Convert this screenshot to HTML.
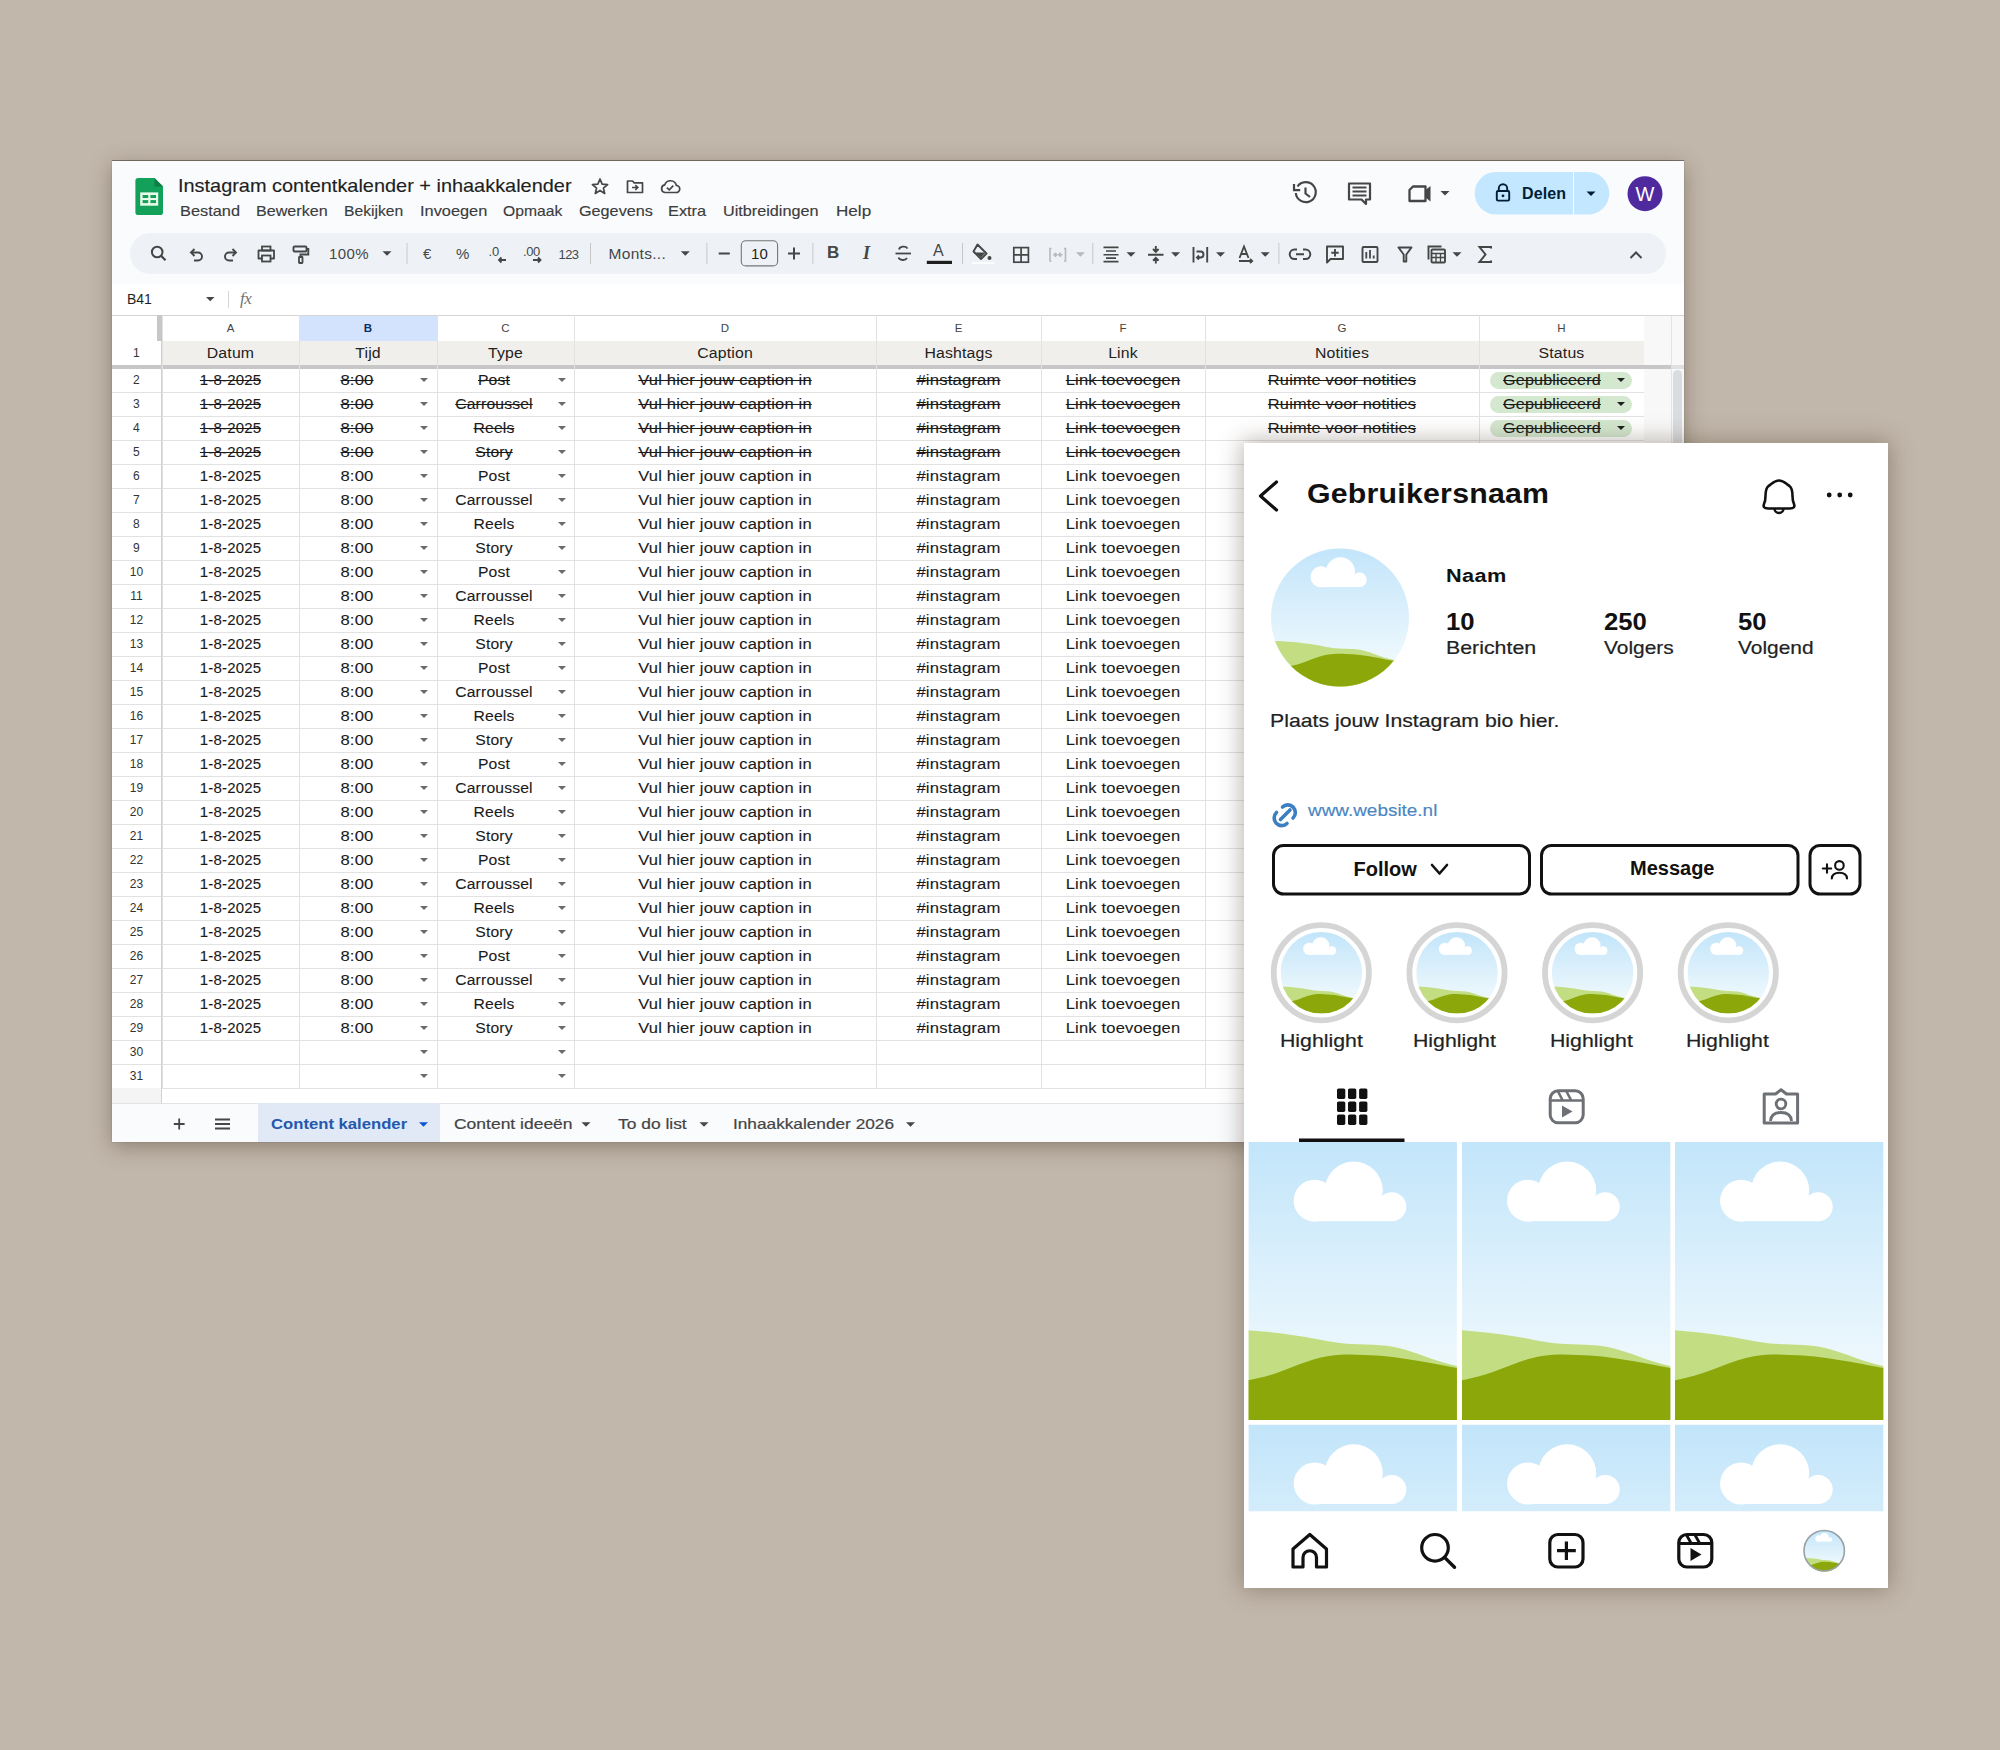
<!DOCTYPE html><html><head><meta charset='utf-8'><style>
*{margin:0;padding:0;box-sizing:border-box}
html,body{width:2000px;height:1750px;overflow:hidden;background:#c2b7ab;font-family:"Liberation Sans",sans-serif}
.a{position:absolute}
.t{position:absolute;white-space:nowrap}
.win{position:absolute;left:112px;top:161px;width:1572px;height:981px;background:#f9fbfd;overflow:hidden;box-shadow:0 5px 20px rgba(70,55,40,.42),0 -1px 0 rgba(70,60,50,.55),0 0 1px rgba(0,0,0,.35)}
.cell{position:absolute;white-space:nowrap;font-size:14px;line-height:24px;height:24px;color:#1a1a1a;text-align:center;letter-spacing:.15px;-webkit-text-stroke:.1px #1a1a1a}
.st{text-decoration:line-through;text-decoration-thickness:1px}
.rn{position:absolute;left:0;width:49px;text-align:center;font-size:12px;line-height:24px;color:#333;letter-spacing:.1px}
.dd{position:absolute;width:0;height:0;border-left:4.5px solid transparent;border-right:4.5px solid transparent;border-top:4.5px solid #6b6b6b}
.hl{position:absolute;height:1px;background:#e2e2e2}
.vl{position:absolute;width:1px;background:#e2e2e2}
.ig{position:absolute;left:1244px;top:443px;width:644px;height:1145px;background:#fff;overflow:hidden;box-shadow:0 0 22px 2px rgba(70,55,40,.38)}
</style></head><body>
<div class='win'>
<div class='t' style='left:66px;top:14px;font-size:19px;color:#1f1f1f;line-height:22px;transform-origin:0 50%;transform:scaleX(1.048);-webkit-text-stroke:.15px #1f1f1f'>Instagram contentkalender + inhaakkalender</div>
<div class='t' style='left:67.5px;top:41px;font-size:15px;color:#3c3c3c;line-height:18px;transform-origin:0 50%;transform:scaleX(1.090);-webkit-text-stroke:.15px #3c3c3c'>Bestand</div>
<div class='t' style='left:144.0px;top:41px;font-size:15px;color:#3c3c3c;line-height:18px;transform-origin:0 50%;transform:scaleX(1.075);-webkit-text-stroke:.15px #3c3c3c'>Bewerken</div>
<div class='t' style='left:231.8px;top:41px;font-size:15px;color:#3c3c3c;line-height:18px;transform-origin:0 50%;transform:scaleX(1.045);-webkit-text-stroke:.15px #3c3c3c'>Bekijken</div>
<div class='t' style='left:308.0px;top:41px;font-size:15px;color:#3c3c3c;line-height:18px;transform-origin:0 50%;transform:scaleX(1.090);-webkit-text-stroke:.15px #3c3c3c'>Invoegen</div>
<div class='t' style='left:391.0px;top:41px;font-size:15px;color:#3c3c3c;line-height:18px;transform-origin:0 50%;transform:scaleX(1.045);-webkit-text-stroke:.15px #3c3c3c'>Opmaak</div>
<div class='t' style='left:467.3px;top:41px;font-size:15px;color:#3c3c3c;line-height:18px;transform-origin:0 50%;transform:scaleX(1.080);-webkit-text-stroke:.15px #3c3c3c'>Gegevens</div>
<div class='t' style='left:555.8px;top:41px;font-size:15px;color:#3c3c3c;line-height:18px;transform-origin:0 50%;transform:scaleX(1.090);-webkit-text-stroke:.15px #3c3c3c'>Extra</div>
<div class='t' style='left:611.0px;top:41px;font-size:15px;color:#3c3c3c;line-height:18px;transform-origin:0 50%;transform:scaleX(1.080);-webkit-text-stroke:.15px #3c3c3c'>Uitbreidingen</div>
<div class='t' style='left:724.0px;top:41px;font-size:15px;color:#3c3c3c;line-height:18px;transform-origin:0 50%;transform:scaleX(1.140);-webkit-text-stroke:.15px #3c3c3c'>Help</div>
<div class='a' style='left:18px;top:72px;width:1536px;height:41px;border-radius:21px;background:#eef2f7'></div>
<div class='a' style='left:0;top:123px;width:1572px;height:819px;background:#fff'></div>
<div class='t' style='left:15px;top:130px;font-size:14px;color:#1f1f1f;line-height:16px'>B41</div>
<div class='hl' style='left:0;top:154px;width:1572px;background:#d4d4d4'></div>
<div class='a' style='left:187px;top:155px;width:138px;height:25px;background:#d3e3fd'></div>
<div class='t' style='left:50px;top:155px;width:137px;text-align:center;font-size:11.5px;line-height:25px;color:#444'>A</div>
<div class='t' style='left:187px;top:155px;width:138px;text-align:center;font-size:11.5px;line-height:25px;font-weight:bold;color:#0b2f66'>B</div>
<div class='t' style='left:325px;top:155px;width:137px;text-align:center;font-size:11.5px;line-height:25px;color:#444'>C</div>
<div class='t' style='left:462px;top:155px;width:302px;text-align:center;font-size:11.5px;line-height:25px;color:#444'>D</div>
<div class='t' style='left:764px;top:155px;width:165px;text-align:center;font-size:11.5px;line-height:25px;color:#444'>E</div>
<div class='t' style='left:929px;top:155px;width:164px;text-align:center;font-size:11.5px;line-height:25px;color:#444'>F</div>
<div class='t' style='left:1093px;top:155px;width:274px;text-align:center;font-size:11.5px;line-height:25px;color:#444'>G</div>
<div class='t' style='left:1367px;top:155px;width:165px;text-align:center;font-size:11.5px;line-height:25px;color:#444'>H</div>
<div class='a' style='left:50px;top:180px;width:1482px;height:24px;background:#f1efeb'></div>
<div class='cell' style='left:50px;top:180px;width:137px;transform:scaleX(1.13);-webkit-text-stroke:0;color:#222'>Datum</div>
<div class='cell' style='left:187px;top:180px;width:138px;transform:scaleX(1.13);-webkit-text-stroke:0;color:#222'>Tijd</div>
<div class='cell' style='left:325px;top:180px;width:137px;transform:scaleX(1.13);-webkit-text-stroke:0;color:#222'>Type</div>
<div class='cell' style='left:462px;top:180px;width:302px;transform:scaleX(1.13);-webkit-text-stroke:0;color:#222'>Caption</div>
<div class='cell' style='left:764px;top:180px;width:165px;transform:scaleX(1.13);-webkit-text-stroke:0;color:#222'>Hashtags</div>
<div class='cell' style='left:929px;top:180px;width:164px;transform:scaleX(1.13);-webkit-text-stroke:0;color:#222'>Link</div>
<div class='cell' style='left:1093px;top:180px;width:274px;transform:scaleX(1.13);-webkit-text-stroke:0;color:#222'>Notities</div>
<div class='cell' style='left:1367px;top:180px;width:165px;transform:scaleX(1.13);-webkit-text-stroke:0;color:#222'>Status</div>
<div class='rn' style='top:180px'>1</div>
<div class='a' style='left:0;top:204px;width:1532px;height:4px;background:#c7c7c7'></div>
<div class='a' style='left:45px;top:154px;width:5px;height:26px;background:#c7c7c7'></div>
<div class='rn' style='top:207px'>2</div>
<div class='cell st' style='left:50px;top:207px;width:137px;transform:scaleX(1.07)'>1-8-2025</div>
<div class='cell st' style='left:188px;top:207px;width:114px;transform:scaleX(1.19)'>8:00</div>
<div class='cell st' style='left:325px;top:207px;width:114px;transform:scaleX(1.12)'>Post</div>
<div class='cell st' style='left:462px;top:207px;width:302px;transform:scaleX(1.18)'>Vul hier jouw caption in</div>
<div class='cell st' style='left:764px;top:207px;width:165px;transform:scaleX(1.19)'>#instagram</div>
<div class='cell st' style='left:929px;top:207px;width:164px;transform:scaleX(1.18)'>Link toevoegen</div>
<div class='cell st' style='left:1093px;top:207px;width:274px;transform:scaleX(1.17)'>Ruimte voor notities</div>
<div class='a' style='left:1378px;top:211px;width:142px;height:17px;border-radius:9px;background:#d4e7cf'></div>
<div class='cell st' style='left:1391px;top:207px;width:98px;transform:scaleX(1.15)'>Gepubliceerd</div>
<div class='dd' style='left:1505px;top:217px;border-top-color:#1f1f1f'></div>
<div class='dd' style='left:308px;top:217px'></div>
<div class='dd' style='left:446px;top:217px'></div>
<div class='hl' style='left:0;top:231px;width:1532px'></div>
<div class='rn' style='top:231px'>3</div>
<div class='cell st' style='left:50px;top:231px;width:137px;transform:scaleX(1.07)'>1-8-2025</div>
<div class='cell st' style='left:188px;top:231px;width:114px;transform:scaleX(1.19)'>8:00</div>
<div class='cell st' style='left:325px;top:231px;width:114px;transform:scaleX(1.12)'>Carroussel</div>
<div class='cell st' style='left:462px;top:231px;width:302px;transform:scaleX(1.18)'>Vul hier jouw caption in</div>
<div class='cell st' style='left:764px;top:231px;width:165px;transform:scaleX(1.19)'>#instagram</div>
<div class='cell st' style='left:929px;top:231px;width:164px;transform:scaleX(1.18)'>Link toevoegen</div>
<div class='cell st' style='left:1093px;top:231px;width:274px;transform:scaleX(1.17)'>Ruimte voor notities</div>
<div class='a' style='left:1378px;top:235px;width:142px;height:17px;border-radius:9px;background:#d4e7cf'></div>
<div class='cell st' style='left:1391px;top:231px;width:98px;transform:scaleX(1.15)'>Gepubliceerd</div>
<div class='dd' style='left:1505px;top:241px;border-top-color:#1f1f1f'></div>
<div class='dd' style='left:308px;top:241px'></div>
<div class='dd' style='left:446px;top:241px'></div>
<div class='hl' style='left:0;top:255px;width:1532px'></div>
<div class='rn' style='top:255px'>4</div>
<div class='cell st' style='left:50px;top:255px;width:137px;transform:scaleX(1.07)'>1-8-2025</div>
<div class='cell st' style='left:188px;top:255px;width:114px;transform:scaleX(1.19)'>8:00</div>
<div class='cell st' style='left:325px;top:255px;width:114px;transform:scaleX(1.12)'>Reels</div>
<div class='cell st' style='left:462px;top:255px;width:302px;transform:scaleX(1.18)'>Vul hier jouw caption in</div>
<div class='cell st' style='left:764px;top:255px;width:165px;transform:scaleX(1.19)'>#instagram</div>
<div class='cell st' style='left:929px;top:255px;width:164px;transform:scaleX(1.18)'>Link toevoegen</div>
<div class='cell st' style='left:1093px;top:255px;width:274px;transform:scaleX(1.17)'>Ruimte voor notities</div>
<div class='a' style='left:1378px;top:259px;width:142px;height:17px;border-radius:9px;background:#d4e7cf'></div>
<div class='cell st' style='left:1391px;top:255px;width:98px;transform:scaleX(1.15)'>Gepubliceerd</div>
<div class='dd' style='left:1505px;top:265px;border-top-color:#1f1f1f'></div>
<div class='dd' style='left:308px;top:265px'></div>
<div class='dd' style='left:446px;top:265px'></div>
<div class='hl' style='left:0;top:279px;width:1532px'></div>
<div class='rn' style='top:279px'>5</div>
<div class='cell st' style='left:50px;top:279px;width:137px;transform:scaleX(1.07)'>1-8-2025</div>
<div class='cell st' style='left:188px;top:279px;width:114px;transform:scaleX(1.19)'>8:00</div>
<div class='cell st' style='left:325px;top:279px;width:114px;transform:scaleX(1.12)'>Story</div>
<div class='cell st' style='left:462px;top:279px;width:302px;transform:scaleX(1.18)'>Vul hier jouw caption in</div>
<div class='cell st' style='left:764px;top:279px;width:165px;transform:scaleX(1.19)'>#instagram</div>
<div class='cell st' style='left:929px;top:279px;width:164px;transform:scaleX(1.18)'>Link toevoegen</div>
<div class='dd' style='left:308px;top:289px'></div>
<div class='dd' style='left:446px;top:289px'></div>
<div class='hl' style='left:0;top:303px;width:1532px'></div>
<div class='rn' style='top:303px'>6</div>
<div class='cell' style='left:50px;top:303px;width:137px;transform:scaleX(1.07)'>1-8-2025</div>
<div class='cell' style='left:188px;top:303px;width:114px;transform:scaleX(1.19)'>8:00</div>
<div class='cell' style='left:325px;top:303px;width:114px;transform:scaleX(1.12)'>Post</div>
<div class='cell' style='left:462px;top:303px;width:302px;transform:scaleX(1.18)'>Vul hier jouw caption in</div>
<div class='cell' style='left:764px;top:303px;width:165px;transform:scaleX(1.19)'>#instagram</div>
<div class='cell' style='left:929px;top:303px;width:164px;transform:scaleX(1.18)'>Link toevoegen</div>
<div class='dd' style='left:308px;top:313px'></div>
<div class='dd' style='left:446px;top:313px'></div>
<div class='hl' style='left:0;top:327px;width:1532px'></div>
<div class='rn' style='top:327px'>7</div>
<div class='cell' style='left:50px;top:327px;width:137px;transform:scaleX(1.07)'>1-8-2025</div>
<div class='cell' style='left:188px;top:327px;width:114px;transform:scaleX(1.19)'>8:00</div>
<div class='cell' style='left:325px;top:327px;width:114px;transform:scaleX(1.12)'>Carroussel</div>
<div class='cell' style='left:462px;top:327px;width:302px;transform:scaleX(1.18)'>Vul hier jouw caption in</div>
<div class='cell' style='left:764px;top:327px;width:165px;transform:scaleX(1.19)'>#instagram</div>
<div class='cell' style='left:929px;top:327px;width:164px;transform:scaleX(1.18)'>Link toevoegen</div>
<div class='dd' style='left:308px;top:337px'></div>
<div class='dd' style='left:446px;top:337px'></div>
<div class='hl' style='left:0;top:351px;width:1532px'></div>
<div class='rn' style='top:351px'>8</div>
<div class='cell' style='left:50px;top:351px;width:137px;transform:scaleX(1.07)'>1-8-2025</div>
<div class='cell' style='left:188px;top:351px;width:114px;transform:scaleX(1.19)'>8:00</div>
<div class='cell' style='left:325px;top:351px;width:114px;transform:scaleX(1.12)'>Reels</div>
<div class='cell' style='left:462px;top:351px;width:302px;transform:scaleX(1.18)'>Vul hier jouw caption in</div>
<div class='cell' style='left:764px;top:351px;width:165px;transform:scaleX(1.19)'>#instagram</div>
<div class='cell' style='left:929px;top:351px;width:164px;transform:scaleX(1.18)'>Link toevoegen</div>
<div class='dd' style='left:308px;top:361px'></div>
<div class='dd' style='left:446px;top:361px'></div>
<div class='hl' style='left:0;top:375px;width:1532px'></div>
<div class='rn' style='top:375px'>9</div>
<div class='cell' style='left:50px;top:375px;width:137px;transform:scaleX(1.07)'>1-8-2025</div>
<div class='cell' style='left:188px;top:375px;width:114px;transform:scaleX(1.19)'>8:00</div>
<div class='cell' style='left:325px;top:375px;width:114px;transform:scaleX(1.12)'>Story</div>
<div class='cell' style='left:462px;top:375px;width:302px;transform:scaleX(1.18)'>Vul hier jouw caption in</div>
<div class='cell' style='left:764px;top:375px;width:165px;transform:scaleX(1.19)'>#instagram</div>
<div class='cell' style='left:929px;top:375px;width:164px;transform:scaleX(1.18)'>Link toevoegen</div>
<div class='dd' style='left:308px;top:385px'></div>
<div class='dd' style='left:446px;top:385px'></div>
<div class='hl' style='left:0;top:399px;width:1532px'></div>
<div class='rn' style='top:399px'>10</div>
<div class='cell' style='left:50px;top:399px;width:137px;transform:scaleX(1.07)'>1-8-2025</div>
<div class='cell' style='left:188px;top:399px;width:114px;transform:scaleX(1.19)'>8:00</div>
<div class='cell' style='left:325px;top:399px;width:114px;transform:scaleX(1.12)'>Post</div>
<div class='cell' style='left:462px;top:399px;width:302px;transform:scaleX(1.18)'>Vul hier jouw caption in</div>
<div class='cell' style='left:764px;top:399px;width:165px;transform:scaleX(1.19)'>#instagram</div>
<div class='cell' style='left:929px;top:399px;width:164px;transform:scaleX(1.18)'>Link toevoegen</div>
<div class='dd' style='left:308px;top:409px'></div>
<div class='dd' style='left:446px;top:409px'></div>
<div class='hl' style='left:0;top:423px;width:1532px'></div>
<div class='rn' style='top:423px'>11</div>
<div class='cell' style='left:50px;top:423px;width:137px;transform:scaleX(1.07)'>1-8-2025</div>
<div class='cell' style='left:188px;top:423px;width:114px;transform:scaleX(1.19)'>8:00</div>
<div class='cell' style='left:325px;top:423px;width:114px;transform:scaleX(1.12)'>Carroussel</div>
<div class='cell' style='left:462px;top:423px;width:302px;transform:scaleX(1.18)'>Vul hier jouw caption in</div>
<div class='cell' style='left:764px;top:423px;width:165px;transform:scaleX(1.19)'>#instagram</div>
<div class='cell' style='left:929px;top:423px;width:164px;transform:scaleX(1.18)'>Link toevoegen</div>
<div class='dd' style='left:308px;top:433px'></div>
<div class='dd' style='left:446px;top:433px'></div>
<div class='hl' style='left:0;top:447px;width:1532px'></div>
<div class='rn' style='top:447px'>12</div>
<div class='cell' style='left:50px;top:447px;width:137px;transform:scaleX(1.07)'>1-8-2025</div>
<div class='cell' style='left:188px;top:447px;width:114px;transform:scaleX(1.19)'>8:00</div>
<div class='cell' style='left:325px;top:447px;width:114px;transform:scaleX(1.12)'>Reels</div>
<div class='cell' style='left:462px;top:447px;width:302px;transform:scaleX(1.18)'>Vul hier jouw caption in</div>
<div class='cell' style='left:764px;top:447px;width:165px;transform:scaleX(1.19)'>#instagram</div>
<div class='cell' style='left:929px;top:447px;width:164px;transform:scaleX(1.18)'>Link toevoegen</div>
<div class='dd' style='left:308px;top:457px'></div>
<div class='dd' style='left:446px;top:457px'></div>
<div class='hl' style='left:0;top:471px;width:1532px'></div>
<div class='rn' style='top:471px'>13</div>
<div class='cell' style='left:50px;top:471px;width:137px;transform:scaleX(1.07)'>1-8-2025</div>
<div class='cell' style='left:188px;top:471px;width:114px;transform:scaleX(1.19)'>8:00</div>
<div class='cell' style='left:325px;top:471px;width:114px;transform:scaleX(1.12)'>Story</div>
<div class='cell' style='left:462px;top:471px;width:302px;transform:scaleX(1.18)'>Vul hier jouw caption in</div>
<div class='cell' style='left:764px;top:471px;width:165px;transform:scaleX(1.19)'>#instagram</div>
<div class='cell' style='left:929px;top:471px;width:164px;transform:scaleX(1.18)'>Link toevoegen</div>
<div class='dd' style='left:308px;top:481px'></div>
<div class='dd' style='left:446px;top:481px'></div>
<div class='hl' style='left:0;top:495px;width:1532px'></div>
<div class='rn' style='top:495px'>14</div>
<div class='cell' style='left:50px;top:495px;width:137px;transform:scaleX(1.07)'>1-8-2025</div>
<div class='cell' style='left:188px;top:495px;width:114px;transform:scaleX(1.19)'>8:00</div>
<div class='cell' style='left:325px;top:495px;width:114px;transform:scaleX(1.12)'>Post</div>
<div class='cell' style='left:462px;top:495px;width:302px;transform:scaleX(1.18)'>Vul hier jouw caption in</div>
<div class='cell' style='left:764px;top:495px;width:165px;transform:scaleX(1.19)'>#instagram</div>
<div class='cell' style='left:929px;top:495px;width:164px;transform:scaleX(1.18)'>Link toevoegen</div>
<div class='dd' style='left:308px;top:505px'></div>
<div class='dd' style='left:446px;top:505px'></div>
<div class='hl' style='left:0;top:519px;width:1532px'></div>
<div class='rn' style='top:519px'>15</div>
<div class='cell' style='left:50px;top:519px;width:137px;transform:scaleX(1.07)'>1-8-2025</div>
<div class='cell' style='left:188px;top:519px;width:114px;transform:scaleX(1.19)'>8:00</div>
<div class='cell' style='left:325px;top:519px;width:114px;transform:scaleX(1.12)'>Carroussel</div>
<div class='cell' style='left:462px;top:519px;width:302px;transform:scaleX(1.18)'>Vul hier jouw caption in</div>
<div class='cell' style='left:764px;top:519px;width:165px;transform:scaleX(1.19)'>#instagram</div>
<div class='cell' style='left:929px;top:519px;width:164px;transform:scaleX(1.18)'>Link toevoegen</div>
<div class='dd' style='left:308px;top:529px'></div>
<div class='dd' style='left:446px;top:529px'></div>
<div class='hl' style='left:0;top:543px;width:1532px'></div>
<div class='rn' style='top:543px'>16</div>
<div class='cell' style='left:50px;top:543px;width:137px;transform:scaleX(1.07)'>1-8-2025</div>
<div class='cell' style='left:188px;top:543px;width:114px;transform:scaleX(1.19)'>8:00</div>
<div class='cell' style='left:325px;top:543px;width:114px;transform:scaleX(1.12)'>Reels</div>
<div class='cell' style='left:462px;top:543px;width:302px;transform:scaleX(1.18)'>Vul hier jouw caption in</div>
<div class='cell' style='left:764px;top:543px;width:165px;transform:scaleX(1.19)'>#instagram</div>
<div class='cell' style='left:929px;top:543px;width:164px;transform:scaleX(1.18)'>Link toevoegen</div>
<div class='dd' style='left:308px;top:553px'></div>
<div class='dd' style='left:446px;top:553px'></div>
<div class='hl' style='left:0;top:567px;width:1532px'></div>
<div class='rn' style='top:567px'>17</div>
<div class='cell' style='left:50px;top:567px;width:137px;transform:scaleX(1.07)'>1-8-2025</div>
<div class='cell' style='left:188px;top:567px;width:114px;transform:scaleX(1.19)'>8:00</div>
<div class='cell' style='left:325px;top:567px;width:114px;transform:scaleX(1.12)'>Story</div>
<div class='cell' style='left:462px;top:567px;width:302px;transform:scaleX(1.18)'>Vul hier jouw caption in</div>
<div class='cell' style='left:764px;top:567px;width:165px;transform:scaleX(1.19)'>#instagram</div>
<div class='cell' style='left:929px;top:567px;width:164px;transform:scaleX(1.18)'>Link toevoegen</div>
<div class='dd' style='left:308px;top:577px'></div>
<div class='dd' style='left:446px;top:577px'></div>
<div class='hl' style='left:0;top:591px;width:1532px'></div>
<div class='rn' style='top:591px'>18</div>
<div class='cell' style='left:50px;top:591px;width:137px;transform:scaleX(1.07)'>1-8-2025</div>
<div class='cell' style='left:188px;top:591px;width:114px;transform:scaleX(1.19)'>8:00</div>
<div class='cell' style='left:325px;top:591px;width:114px;transform:scaleX(1.12)'>Post</div>
<div class='cell' style='left:462px;top:591px;width:302px;transform:scaleX(1.18)'>Vul hier jouw caption in</div>
<div class='cell' style='left:764px;top:591px;width:165px;transform:scaleX(1.19)'>#instagram</div>
<div class='cell' style='left:929px;top:591px;width:164px;transform:scaleX(1.18)'>Link toevoegen</div>
<div class='dd' style='left:308px;top:601px'></div>
<div class='dd' style='left:446px;top:601px'></div>
<div class='hl' style='left:0;top:615px;width:1532px'></div>
<div class='rn' style='top:615px'>19</div>
<div class='cell' style='left:50px;top:615px;width:137px;transform:scaleX(1.07)'>1-8-2025</div>
<div class='cell' style='left:188px;top:615px;width:114px;transform:scaleX(1.19)'>8:00</div>
<div class='cell' style='left:325px;top:615px;width:114px;transform:scaleX(1.12)'>Carroussel</div>
<div class='cell' style='left:462px;top:615px;width:302px;transform:scaleX(1.18)'>Vul hier jouw caption in</div>
<div class='cell' style='left:764px;top:615px;width:165px;transform:scaleX(1.19)'>#instagram</div>
<div class='cell' style='left:929px;top:615px;width:164px;transform:scaleX(1.18)'>Link toevoegen</div>
<div class='dd' style='left:308px;top:625px'></div>
<div class='dd' style='left:446px;top:625px'></div>
<div class='hl' style='left:0;top:639px;width:1532px'></div>
<div class='rn' style='top:639px'>20</div>
<div class='cell' style='left:50px;top:639px;width:137px;transform:scaleX(1.07)'>1-8-2025</div>
<div class='cell' style='left:188px;top:639px;width:114px;transform:scaleX(1.19)'>8:00</div>
<div class='cell' style='left:325px;top:639px;width:114px;transform:scaleX(1.12)'>Reels</div>
<div class='cell' style='left:462px;top:639px;width:302px;transform:scaleX(1.18)'>Vul hier jouw caption in</div>
<div class='cell' style='left:764px;top:639px;width:165px;transform:scaleX(1.19)'>#instagram</div>
<div class='cell' style='left:929px;top:639px;width:164px;transform:scaleX(1.18)'>Link toevoegen</div>
<div class='dd' style='left:308px;top:649px'></div>
<div class='dd' style='left:446px;top:649px'></div>
<div class='hl' style='left:0;top:663px;width:1532px'></div>
<div class='rn' style='top:663px'>21</div>
<div class='cell' style='left:50px;top:663px;width:137px;transform:scaleX(1.07)'>1-8-2025</div>
<div class='cell' style='left:188px;top:663px;width:114px;transform:scaleX(1.19)'>8:00</div>
<div class='cell' style='left:325px;top:663px;width:114px;transform:scaleX(1.12)'>Story</div>
<div class='cell' style='left:462px;top:663px;width:302px;transform:scaleX(1.18)'>Vul hier jouw caption in</div>
<div class='cell' style='left:764px;top:663px;width:165px;transform:scaleX(1.19)'>#instagram</div>
<div class='cell' style='left:929px;top:663px;width:164px;transform:scaleX(1.18)'>Link toevoegen</div>
<div class='dd' style='left:308px;top:673px'></div>
<div class='dd' style='left:446px;top:673px'></div>
<div class='hl' style='left:0;top:687px;width:1532px'></div>
<div class='rn' style='top:687px'>22</div>
<div class='cell' style='left:50px;top:687px;width:137px;transform:scaleX(1.07)'>1-8-2025</div>
<div class='cell' style='left:188px;top:687px;width:114px;transform:scaleX(1.19)'>8:00</div>
<div class='cell' style='left:325px;top:687px;width:114px;transform:scaleX(1.12)'>Post</div>
<div class='cell' style='left:462px;top:687px;width:302px;transform:scaleX(1.18)'>Vul hier jouw caption in</div>
<div class='cell' style='left:764px;top:687px;width:165px;transform:scaleX(1.19)'>#instagram</div>
<div class='cell' style='left:929px;top:687px;width:164px;transform:scaleX(1.18)'>Link toevoegen</div>
<div class='dd' style='left:308px;top:697px'></div>
<div class='dd' style='left:446px;top:697px'></div>
<div class='hl' style='left:0;top:711px;width:1532px'></div>
<div class='rn' style='top:711px'>23</div>
<div class='cell' style='left:50px;top:711px;width:137px;transform:scaleX(1.07)'>1-8-2025</div>
<div class='cell' style='left:188px;top:711px;width:114px;transform:scaleX(1.19)'>8:00</div>
<div class='cell' style='left:325px;top:711px;width:114px;transform:scaleX(1.12)'>Carroussel</div>
<div class='cell' style='left:462px;top:711px;width:302px;transform:scaleX(1.18)'>Vul hier jouw caption in</div>
<div class='cell' style='left:764px;top:711px;width:165px;transform:scaleX(1.19)'>#instagram</div>
<div class='cell' style='left:929px;top:711px;width:164px;transform:scaleX(1.18)'>Link toevoegen</div>
<div class='dd' style='left:308px;top:721px'></div>
<div class='dd' style='left:446px;top:721px'></div>
<div class='hl' style='left:0;top:735px;width:1532px'></div>
<div class='rn' style='top:735px'>24</div>
<div class='cell' style='left:50px;top:735px;width:137px;transform:scaleX(1.07)'>1-8-2025</div>
<div class='cell' style='left:188px;top:735px;width:114px;transform:scaleX(1.19)'>8:00</div>
<div class='cell' style='left:325px;top:735px;width:114px;transform:scaleX(1.12)'>Reels</div>
<div class='cell' style='left:462px;top:735px;width:302px;transform:scaleX(1.18)'>Vul hier jouw caption in</div>
<div class='cell' style='left:764px;top:735px;width:165px;transform:scaleX(1.19)'>#instagram</div>
<div class='cell' style='left:929px;top:735px;width:164px;transform:scaleX(1.18)'>Link toevoegen</div>
<div class='dd' style='left:308px;top:745px'></div>
<div class='dd' style='left:446px;top:745px'></div>
<div class='hl' style='left:0;top:759px;width:1532px'></div>
<div class='rn' style='top:759px'>25</div>
<div class='cell' style='left:50px;top:759px;width:137px;transform:scaleX(1.07)'>1-8-2025</div>
<div class='cell' style='left:188px;top:759px;width:114px;transform:scaleX(1.19)'>8:00</div>
<div class='cell' style='left:325px;top:759px;width:114px;transform:scaleX(1.12)'>Story</div>
<div class='cell' style='left:462px;top:759px;width:302px;transform:scaleX(1.18)'>Vul hier jouw caption in</div>
<div class='cell' style='left:764px;top:759px;width:165px;transform:scaleX(1.19)'>#instagram</div>
<div class='cell' style='left:929px;top:759px;width:164px;transform:scaleX(1.18)'>Link toevoegen</div>
<div class='dd' style='left:308px;top:769px'></div>
<div class='dd' style='left:446px;top:769px'></div>
<div class='hl' style='left:0;top:783px;width:1532px'></div>
<div class='rn' style='top:783px'>26</div>
<div class='cell' style='left:50px;top:783px;width:137px;transform:scaleX(1.07)'>1-8-2025</div>
<div class='cell' style='left:188px;top:783px;width:114px;transform:scaleX(1.19)'>8:00</div>
<div class='cell' style='left:325px;top:783px;width:114px;transform:scaleX(1.12)'>Post</div>
<div class='cell' style='left:462px;top:783px;width:302px;transform:scaleX(1.18)'>Vul hier jouw caption in</div>
<div class='cell' style='left:764px;top:783px;width:165px;transform:scaleX(1.19)'>#instagram</div>
<div class='cell' style='left:929px;top:783px;width:164px;transform:scaleX(1.18)'>Link toevoegen</div>
<div class='dd' style='left:308px;top:793px'></div>
<div class='dd' style='left:446px;top:793px'></div>
<div class='hl' style='left:0;top:807px;width:1532px'></div>
<div class='rn' style='top:807px'>27</div>
<div class='cell' style='left:50px;top:807px;width:137px;transform:scaleX(1.07)'>1-8-2025</div>
<div class='cell' style='left:188px;top:807px;width:114px;transform:scaleX(1.19)'>8:00</div>
<div class='cell' style='left:325px;top:807px;width:114px;transform:scaleX(1.12)'>Carroussel</div>
<div class='cell' style='left:462px;top:807px;width:302px;transform:scaleX(1.18)'>Vul hier jouw caption in</div>
<div class='cell' style='left:764px;top:807px;width:165px;transform:scaleX(1.19)'>#instagram</div>
<div class='cell' style='left:929px;top:807px;width:164px;transform:scaleX(1.18)'>Link toevoegen</div>
<div class='dd' style='left:308px;top:817px'></div>
<div class='dd' style='left:446px;top:817px'></div>
<div class='hl' style='left:0;top:831px;width:1532px'></div>
<div class='rn' style='top:831px'>28</div>
<div class='cell' style='left:50px;top:831px;width:137px;transform:scaleX(1.07)'>1-8-2025</div>
<div class='cell' style='left:188px;top:831px;width:114px;transform:scaleX(1.19)'>8:00</div>
<div class='cell' style='left:325px;top:831px;width:114px;transform:scaleX(1.12)'>Reels</div>
<div class='cell' style='left:462px;top:831px;width:302px;transform:scaleX(1.18)'>Vul hier jouw caption in</div>
<div class='cell' style='left:764px;top:831px;width:165px;transform:scaleX(1.19)'>#instagram</div>
<div class='cell' style='left:929px;top:831px;width:164px;transform:scaleX(1.18)'>Link toevoegen</div>
<div class='dd' style='left:308px;top:841px'></div>
<div class='dd' style='left:446px;top:841px'></div>
<div class='hl' style='left:0;top:855px;width:1532px'></div>
<div class='rn' style='top:855px'>29</div>
<div class='cell' style='left:50px;top:855px;width:137px;transform:scaleX(1.07)'>1-8-2025</div>
<div class='cell' style='left:188px;top:855px;width:114px;transform:scaleX(1.19)'>8:00</div>
<div class='cell' style='left:325px;top:855px;width:114px;transform:scaleX(1.12)'>Story</div>
<div class='cell' style='left:462px;top:855px;width:302px;transform:scaleX(1.18)'>Vul hier jouw caption in</div>
<div class='cell' style='left:764px;top:855px;width:165px;transform:scaleX(1.19)'>#instagram</div>
<div class='cell' style='left:929px;top:855px;width:164px;transform:scaleX(1.18)'>Link toevoegen</div>
<div class='dd' style='left:308px;top:865px'></div>
<div class='dd' style='left:446px;top:865px'></div>
<div class='hl' style='left:0;top:879px;width:1532px'></div>
<div class='rn' style='top:879px'>30</div>
<div class='dd' style='left:308px;top:889px'></div>
<div class='dd' style='left:446px;top:889px'></div>
<div class='hl' style='left:0;top:903px;width:1532px'></div>
<div class='rn' style='top:903px'>31</div>
<div class='dd' style='left:308px;top:913px'></div>
<div class='dd' style='left:446px;top:913px'></div>
<div class='hl' style='left:0;top:927px;width:1532px'></div>
<div class='vl' style='left:50px;top:154px;height:773px'></div>
<div class='vl' style='left:187px;top:154px;height:773px'></div>
<div class='vl' style='left:325px;top:154px;height:773px'></div>
<div class='vl' style='left:462px;top:154px;height:773px'></div>
<div class='vl' style='left:764px;top:154px;height:773px'></div>
<div class='vl' style='left:929px;top:154px;height:773px'></div>
<div class='vl' style='left:1093px;top:154px;height:773px'></div>
<div class='vl' style='left:1367px;top:154px;height:773px'></div>
<div class='vl' style='left:1532px;top:154px;height:773px'></div>
<div class='vl' style='left:49px;top:180px;height:762px;background:#d0d0d0'></div>
<div class='a' style='left:0;top:927px;width:49px;height:15px;background:#f4f4f4'></div>
<div class='a' style='left:1532px;top:155px;width:40px;height:787px;background:#f8f8f8'></div>
<div class='vl' style='left:1559px;top:155px;height:787px;background:#e4e4e4'></div>
<div class='a' style='left:1532px;top:204px;width:27px;height:4px;background:#c7c7c7'></div>
<div class='a' style='left:1559px;top:204px;width:13px;height:4px;background:#e0e0e0'></div>
<div class='a' style='left:1561px;top:209px;width:9px;height:300px;border-radius:5px;background:#d9dce0'></div>
<div class='a' style='left:0;top:942px;width:1572px;height:39px;background:#f9fbfd;border-top:1px solid #e3e3e3'></div>
<div class='a' style='left:146px;top:942px;width:182px;height:39px;background:#e1e9f7'></div>
<div class='t' style='left:159px;top:954px;font-size:15px;font-weight:bold;color:#2458ad;line-height:18px;transform-origin:0 50%;transform:scaleX(1.111)'>Content kalender</div>
<div class='t' style='left:342px;top:954px;font-size:15px;color:#444;line-height:18px;transform-origin:0 50%;transform:scaleX(1.165);-webkit-text-stroke:.2px #444'>Content idee&euml;n</div>
<div class='t' style='left:506px;top:954px;font-size:15px;color:#444;line-height:18px;transform-origin:0 50%;transform:scaleX(1.16);-webkit-text-stroke:.2px #444'>To do list</div>
<div class='t' style='left:621px;top:954px;font-size:15px;color:#444;line-height:18px;transform-origin:0 50%;transform:scaleX(1.149);-webkit-text-stroke:.2px #444'>Inhaakkalender 2026</div>
<svg class='a' style='left:0;top:0' width='1572' height='981' viewBox='112 161 1572 981'><path d='M138.2 178 H154.5 L163 186.5 V212.2 A2.8 2.8 0 0 1 160.2 215 H138.2 A2.8 2.8 0 0 1 135.4 212.2 V180.8 A2.8 2.8 0 0 1 138.2 178 Z' fill='#13a15a'/><path d='M154.5 178 V186.5 H163 Z' fill='#0d7f45'/><rect x='140.2' y='192.4' width='18' height='13.3' fill='#e9fbe9'/><rect x='142.6' y='195.0' width='5.6' height='3' fill='#13a15a'/><rect x='150.4' y='195.0' width='5.6' height='3' fill='#13a15a'/><rect x='142.6' y='200.1' width='5.6' height='3' fill='#13a15a'/><rect x='150.4' y='200.1' width='5.6' height='3' fill='#13a15a'/><polygon points='600.00,179.00 602.12,184.09 607.61,184.53 603.42,188.11 604.70,193.47 600.00,190.60 595.30,193.47 596.58,188.11 592.39,184.53 597.88,184.09' fill='none' stroke='#444746' stroke-width='1.7' stroke-linejoin='round'/><path d='M627.5 181 H632.5 L634.2 182.8 H642.5 V192.5 H627.5 Z' fill='none' stroke='#444746' stroke-width='1.7' stroke-linejoin='round'/><path d='M632 187.5 H637.5 M635.3 185.2 L637.8 187.5 L635.3 189.8' fill='none' stroke='#444746' stroke-width='1.6'/><path d='M665 192.5 H676 A3.6 3.6 0 0 0 676.3 185.3 A6 6 0 0 0 664.8 184.8 A3.9 3.9 0 0 0 665 192.5 Z' fill='none' stroke='#444746' stroke-width='1.7'/><path d='M666.8 187.6 L669.3 189.8 L673.3 185.6' fill='none' stroke='#444746' stroke-width='1.6'/><path d='M1297.5 186.5 A10 10 0 1 1 1295.8 193' fill='none' stroke='#444746' stroke-width='2.2'/><path d='M1294 184 V190.2 H1300.2' fill='none' stroke='#444746' stroke-width='2.2'/><path d='M1305.5 187.5 V193.5 L1310 197' fill='none' stroke='#444746' stroke-width='2.2'/><path d='M1349 183.5 H1370 V199.5 H1366 V204 L1361.5 199.5 H1349 Z' fill='none' stroke='#444746' stroke-width='2.2' stroke-linejoin='round'/><path d='M1352.5 187.5 H1366.5 M1352.5 191.5 H1366.5 M1352.5 195.5 H1366.5' stroke='#444746' stroke-width='1.8'/><path d='M1413 186.5 H1425.5 V201 H1409.5 V190 Z' fill='none' stroke='#444746' stroke-width='2.3' stroke-linejoin='round'/><path d='M1425.5 190 L1430.5 186 V201.5 L1425.5 197.5 Z' fill='#444746'/><path d='M1440.5 191 H1449.5 L1445 195.5 Z' fill='#444746'/><path d='M1496 172 H1573 V214.6 H1496 A21.3 21.3 0 0 1 1496 172 Z' fill='#c2e7ff'/><path d='M1574 172 H1588 A21.3 21.3 0 0 1 1588 214.6 H1574 Z' fill='#c2e7ff'/><path d='M1498.8 191 V188.5 A4.2 4.2 0 0 1 1507.2 188.5 V191' fill='none' stroke='#001d35' stroke-width='1.9'/><rect x='1496.8' y='191' width='12.4' height='9.6' rx='1.3' fill='none' stroke='#001d35' stroke-width='1.9'/><circle cx='1503' cy='195.8' r='1.4' fill='#001d35'/><path d='M1586.5 191.5 H1595.5 L1591 196 Z' fill='#001d35'/><circle cx='1645' cy='193.7' r='17.5' fill='#4f2a9f'/><circle cx='157.2' cy='252' r='5.3' fill='none' stroke='#444746' stroke-width='2'/><path d='M161 255.8 L165.5 260.3' stroke='#444746' stroke-width='2.3'/><path d='M191 252.5 H198 A4 4 0 0 1 198 260.5 H194' fill='none' stroke='#444746' stroke-width='1.9'/><path d='M194.5 249 L191 252.5 L194.5 256' fill='none' stroke='#444746' stroke-width='1.9'/><path d='M236 252.5 H229 A4 4 0 0 0 229 260.5 H233' fill='none' stroke='#444746' stroke-width='1.9'/><path d='M232.5 249 L236 252.5 L232.5 256' fill='none' stroke='#444746' stroke-width='1.9'/><rect x='262' y='246.5' width='8.5' height='4' fill='none' stroke='#444746' stroke-width='1.8'/><path d='M262 258.5 H258.5 V250.5 H274 V258.5 H270.5' fill='none' stroke='#444746' stroke-width='1.8' stroke-linejoin='round'/><rect x='262' y='255.5' width='8.5' height='6' fill='none' stroke='#444746' stroke-width='1.8'/><rect x='293.5' y='246.5' width='13' height='5' rx='1' fill='none' stroke='#444746' stroke-width='1.9'/><path d='M306.5 249 H308.3 V254.5 H300.5 V257' fill='none' stroke='#444746' stroke-width='1.9'/><rect x='299' y='257' width='3.5' height='6' rx='.5' fill='none' stroke='#444746' stroke-width='1.8'/><path d='M382.5 251.3 H391.5 L387.0 255.8 Z' fill='#444746'/><rect x='406.5' y='243' width='1' height='21' fill='#c7c7c7'/><rect x='590.0' y='243' width='1' height='21' fill='#c7c7c7'/><path d='M680.8 251.3 H689.8 L685.3 255.8 Z' fill='#444746'/><rect x='706.4' y='243' width='1' height='21' fill='#c7c7c7'/><rect x='812.4' y='243' width='1' height='21' fill='#c7c7c7'/><rect x='962.0' y='243' width='1' height='21' fill='#c7c7c7'/><rect x='1092.3' y='243' width='1' height='21' fill='#c7c7c7'/><rect x='1278.4' y='243' width='1' height='21' fill='#c7c7c7'/><path d='M718.7 253.5 H729.8' stroke='#444746' stroke-width='2'/><rect x='741.3' y='240.7' width='36.3' height='25.2' rx='4.5' fill='none' stroke='#747775' stroke-width='1.1'/><path d='M788 253.5 H800 M794 247.5 V259.5' stroke='#444746' stroke-width='2'/><path d='M895.5 253.5 H911' stroke='#444746' stroke-width='1.8'/><path d='M907.5 248.5 A4.5 3.3 0 0 0 899 249.5 M898.5 257.5 A4.5 3.3 0 0 0 907 258' fill='none' stroke='#444746' stroke-width='1.8'/><rect x='926.8' y='260.8' width='25.2' height='3.2' fill='#1f1f1f'/><path d='M977.5 244.5 L986.5 253.5 L981 259 L973.5 251.5 Z' fill='none' stroke='#444746' stroke-width='1.9' stroke-linejoin='round'/><path d='M974.5 252.5 H985.5 L981 257.5 Z' fill='#444746'/><circle cx='989.5' cy='258' r='2' fill='#444746'/><rect x='972' y='262' width='22' height='2' fill='#fff' opacity='.8'/><rect x='1013.8' y='247.6' width='14.6' height='14.6' fill='none' stroke='#444746' stroke-width='1.7'/><path d='M1021.1 247.6 V262.2 M1013.8 254.9 H1028.4' stroke='#444746' stroke-width='1.7'/><path d='M1051.5 248.5 H1050 V261 H1051.5 M1064 248.5 H1065.5 V261 H1064 M1053 254.8 H1056.5 M1054.8 252.8 L1056.8 254.8 L1054.8 256.8 M1062.5 254.8 H1059 M1060.8 252.8 L1058.8 254.8 L1060.8 256.8' fill='none' stroke='#b8b9b9' stroke-width='1.6'/><path d='M1075.9 252.3 H1084.9 L1080.4 256.8 Z' fill='#b8b9b9'/><path d='M1103.5 247.3 H1118.5 M1106 251 H1116 M1103.5 254.75 H1118.5 M1106 258.2 H1116 M1103.5 261.6 H1118.5' stroke='#444746' stroke-width='1.7'/><path d='M1126.5 252.3 H1135.5 L1131.0 256.8 Z' fill='#444746'/><path d='M1148 254.8 H1163.5 M1155.8 246 V251.5 M1153 249 L1155.8 251.8 L1158.6 249 M1155.8 263.5 V258 M1153 260.6 L1155.8 257.8 L1158.6 260.6' fill='none' stroke='#444746' stroke-width='1.9'/><path d='M1171.1 252.3 H1180.1 L1175.6 256.8 Z' fill='#444746'/><path d='M1193.5 247 V262.5 M1207.2 247 V262.5 M1196.5 251.5 H1200.5 A3 3 0 0 1 1200.5 257.5 H1197.5 M1199 255.5 L1197 257.5 L1199 259.5' fill='none' stroke='#444746' stroke-width='1.9'/><path d='M1216.0 252.3 H1225.0 L1220.5 256.8 Z' fill='#444746'/><path d='M1239.5 258 L1244 246.5 L1248.5 258 M1241 254 H1247 M1239 261 H1252 M1250 259 L1252.2 261 L1250 263' fill='none' stroke='#444746' stroke-width='1.8'/><path d='M1260.7 252.3 H1269.7 L1265.2 256.8 Z' fill='#444746'/><path d='M1297 249.5 H1294.5 A4.8 4.8 0 0 0 1294.5 259.1 H1297 M1303 249.5 H1305.5 A4.8 4.8 0 0 1 1305.5 259.1 H1303 M1296 254.3 H1304' fill='none' stroke='#444746' stroke-width='2'/><path d='M1327 246.5 H1343 V259 H1330.5 L1327 262.5 Z' fill='none' stroke='#444746' stroke-width='1.9' stroke-linejoin='round'/><path d='M1335 249 V256.5 M1331.3 252.8 H1338.7' stroke='#444746' stroke-width='1.9'/><rect x='1362.5' y='247' width='15' height='15' rx='1' fill='none' stroke='#444746' stroke-width='1.9'/><path d='M1366.3 258.5 V252 M1370 258.5 V250 M1373.7 258.5 V255.5' stroke='#444746' stroke-width='1.8'/><path d='M1398.5 247.5 H1411.5 L1406.3 254.5 V261.5 H1403.7 V254.5 Z' fill='none' stroke='#444746' stroke-width='1.9' stroke-linejoin='round'/><path d='M1428.5 259.5 V246.5 H1441.5' fill='none' stroke='#444746' stroke-width='1.9'/><rect x='1431.5' y='249.5' width='13.5' height='13' rx='1' fill='none' stroke='#444746' stroke-width='1.9'/><path d='M1431.5 253.5 H1445 M1431.5 257.5 H1445 M1436 253.5 V262.5 M1440.5 253.5 V262.5' stroke='#444746' stroke-width='1.3'/><path d='M1452.5 252.3 H1461.5 L1457.0 256.8 Z' fill='#444746'/><path d='M1491 248.5 V247 H1479.5 L1485.5 254.5 L1479.5 262 H1491 V260.5' fill='none' stroke='#444746' stroke-width='2' stroke-linejoin='miter'/><path d='M1630.5 258 L1636 252.5 L1641.5 258' fill='none' stroke='#444746' stroke-width='2'/><path d='M206 297 H214.5 L210.2 301.3 Z' fill='#444746'/><rect x='228' y='291' width='1' height='17' fill='#d6d6d6'/><path d='M179.2 1118.5 V1129.5 M173.8 1124 H184.6' stroke='#444746' stroke-width='1.8'/><path d='M215 1119.5 H230 M215 1124 H230 M215 1128.5 H230' stroke='#444746' stroke-width='2'/><path d='M419.0 1122.3 H428.0 L423.5 1126.8 Z' fill='#0b57d0'/><path d='M581.5 1122.3 H590.5 L586.0 1126.8 Z' fill='#444746'/><path d='M699.5 1122.3 H708.5 L704.0 1126.8 Z' fill='#444746'/><path d='M906.0 1122.3 H915.0 L910.5 1126.8 Z' fill='#444746'/></svg>
<div class='t' style='left:128.0px;top:128.0px;font-size:17px;line-height:20px;color:#6f7377;font-style:italic;font-family:Liberation Serif;letter-spacing:-.5px'>fx</div>
<div class='t' style='left:217.0px;top:84.0px;font-size:15px;color:#444746;line-height:18px;letter-spacing:.4px'>100%</div>
<div class='t' style='left:311.0px;top:84.0px;font-size:15px;color:#444746;line-height:18px'>&euro;</div>
<div class='t' style='left:344.0px;top:84.0px;font-size:15px;color:#444746;line-height:18px'>%</div>
<div class='t' style='left:376.5px;top:81.5px;font-size:15px;color:#444746;line-height:18px;font-size:13px;letter-spacing:-.2px'>.0</div>
<div class='t' style='left:411.0px;top:81.5px;font-size:15px;color:#444746;line-height:18px;font-size:13px;letter-spacing:-.4px'>.00</div>
<div class='t' style='left:446.5px;top:85.0px;font-size:15px;color:#444746;line-height:18px;font-size:13px;letter-spacing:-.6px'>123</div>
<div class='t' style='left:496.5px;top:84.0px;font-size:15px;color:#444746;line-height:18px;font-size:15.5px;letter-spacing:.3px'>Monts...</div>
<div class='t' style='left:629.3px;top:84.0px;font-size:15px;color:#444746;line-height:18px;width:36.3px;text-align:center;color:#1f1f1f'>10</div>
<div class='t' style='left:715.0px;top:83.0px;font-size:15px;color:#444746;line-height:18px;font-size:17px;font-weight:bold'>B</div>
<div class='t' style='left:751.0px;top:83.0px;font-size:18px;line-height:18px;color:#444746;font-style:italic;font-family:Liberation Serif;font-weight:bold'>I</div>
<div class='t' style='left:821.0px;top:81.0px;font-size:15px;color:#444746;line-height:18px;font-size:16px'>A</div>
<div class='t' style='left:1410.0px;top:23.0px;font-size:16px;font-weight:bold;color:#001d35;line-height:20px;letter-spacing:.1px'>Delen</div>
<div class='t' style='left:1521.0px;top:22.0px;font-size:20px;color:#fff;line-height:22px;width:24px;text-align:center'>W</div>
<svg class='a' style='left:0;top:0' width='1572' height='120' viewBox='112 161 1572 120'><path d='M499 260 H506 M501.5 257.5 L499 260 L501.5 262.5 M533 260 H540.5 M538 257.5 L540.5 260 L538 262.5' fill='none' stroke='#444746' stroke-width='1.8'/></svg>
</div>
<div class='ig'>
<svg class='a' style='left:0;top:0' width='644' height='1145' viewBox='1244 443 644 1145'><defs>
<linearGradient id='sky' x1='0' y1='0' x2='0' y2='235' gradientUnits='userSpaceOnUse'><stop offset='0' stop-color='#c2e5fa'/><stop offset='1' stop-color='#f0f9fd'/></linearGradient>

<clipPath id='cav'><circle cx='1340' cy='617.5' r='69'/></clipPath>
</defs><polyline points='1276.5,482 1260.5,496 1276.5,510' fill='none' stroke='#111' stroke-width='3.2' stroke-linecap='round' stroke-linejoin='round'/><path d='M1779 480.5 C1784 480.5 1786 484 1789.5 486 C1792 488 1792.5 492 1792.5 496 C1792.5 500 1793 502 1794 504 C1795 506.5 1794 508.5 1790 508.5 L1768 508.5 C1764 508.5 1763 506.5 1764 504 C1765 502 1765.5 500 1765.5 496 C1765.5 492 1766 488 1768.5 486 C1772 484 1774 480.5 1779 480.5 Z' fill='none' stroke='#111' stroke-width='2.6' stroke-linejoin='round'/><path d='M1774.5 508.5 A4.5 4.5 0 0 0 1783.5 508.5' fill='none' stroke='#111' stroke-width='2.4'/><circle cx='1829.2' cy='495' r='2.4' fill='#111'/><circle cx='1839.7' cy='495' r='2.4' fill='#111'/><circle cx='1850.2' cy='495' r='2.4' fill='#111'/><svg x='1271' y='548.5' width='138' height='138' viewBox='-34 2 276 276'><defs><clipPath id='cc1'><circle cx='104' cy='140' r='138'/></clipPath></defs><g clip-path='url(#cc1)'>
<rect x='-60' y='-20' width='340' height='320' fill='url(#sky)'/>
<circle cx='105' cy='48.5' r='29' fill='#fff'/>
<circle cx='66' cy='58.7' r='21' fill='#fff'/>
<circle cx='143' cy='64.7' r='14.5' fill='#fff'/>
<rect x='66' y='60' width='77' height='19.2' fill='#fff'/>
<path d='M-60 186 C-20 186 20 189 50 194 C70 197 80 200 95 201.5 C115 203 135 202 150 206 C170 211 185 219 208 224 C225 228 240 230 280 232 L280 300 L-60 300 Z' fill='#c3de82'/>
<path d='M-60 244 C-30 243 -10 241 10 236 C35 231 55 218 80 214 C95 212 105 212.5 115 213 C150 214 175 220 208 226 C230 230 250 232 280 234 L280 300 L-60 300 Z' fill='#8ba709'/>
</g></svg><path d='M1282.5 807 A7.5 7.5 0 1 1 1293 818' fill='none' stroke='#3b7fc2' stroke-width='3.6' stroke-linecap='round'/><path d='M1276.5 812.5 A7.5 7.5 0 1 0 1287 823.5' fill='none' stroke='#3b7fc2' stroke-width='3.6' stroke-linecap='round'/><line x1='1280.5' y1='819.5' x2='1290' y2='810' stroke='#3b7fc2' stroke-width='3.6' stroke-linecap='round'/><rect x='1273.5' y='845.5' width='256.0' height='48.5' rx='10' fill='none' stroke='#111' stroke-width='3'/><rect x='1541.5' y='845.5' width='256.5' height='48.5' rx='10' fill='none' stroke='#111' stroke-width='3'/><rect x='1810.0' y='845.5' width='50.0' height='48.5' rx='10' fill='none' stroke='#111' stroke-width='3'/><polyline points='1432,865 1439.5,873.5 1447,865' fill='none' stroke='#111' stroke-width='2.6' stroke-linecap='round' stroke-linejoin='round'/><path d='M1822.8 868.5 H1831.2 M1827 864.3 V872.7' stroke='#111' stroke-width='2.1' stroke-linecap='round'/><circle cx='1839.4' cy='865.4' r='4.3' fill='none' stroke='#111' stroke-width='2.1'/><path d='M1831.8 878.5 C1832 874.5 1834.5 872.8 1839.4 872.8 C1844.3 872.8 1846.8 874.5 1847 878.5' fill='none' stroke='#111' stroke-width='2.1' stroke-linecap='round'/><circle cx='1321.3' cy='972.8' r='47.6' fill='none' stroke='#d5d5d5' stroke-width='5.8'/><svg x='1280.5' y='932' width='81.6' height='81.6' viewBox='-32 1.4 277.5 277.5'><defs><clipPath id='hc1321'><circle cx='106.75' cy='140.15' r='138.75'/></clipPath></defs><g clip-path='url(#hc1321)'>
<rect x='-60' y='-20' width='340' height='320' fill='url(#sky)'/>
<circle cx='105' cy='48.5' r='29' fill='#fff'/>
<circle cx='66' cy='58.7' r='21' fill='#fff'/>
<circle cx='143' cy='64.7' r='14.5' fill='#fff'/>
<rect x='66' y='60' width='77' height='19.2' fill='#fff'/>
<path d='M-60 186 C-20 186 20 189 50 194 C70 197 80 200 95 201.5 C115 203 135 202 150 206 C170 211 185 219 208 224 C225 228 240 230 280 232 L280 300 L-60 300 Z' fill='#c3de82'/>
<path d='M-60 244 C-30 243 -10 241 10 236 C35 231 55 218 80 214 C95 212 105 212.5 115 213 C150 214 175 220 208 226 C230 230 250 232 280 234 L280 300 L-60 300 Z' fill='#8ba709'/>
</g></svg><circle cx='1457.0' cy='972.8' r='47.6' fill='none' stroke='#d5d5d5' stroke-width='5.8'/><svg x='1416.2' y='932' width='81.6' height='81.6' viewBox='-32 1.4 277.5 277.5'><defs><clipPath id='hc1457'><circle cx='106.75' cy='140.15' r='138.75'/></clipPath></defs><g clip-path='url(#hc1457)'>
<rect x='-60' y='-20' width='340' height='320' fill='url(#sky)'/>
<circle cx='105' cy='48.5' r='29' fill='#fff'/>
<circle cx='66' cy='58.7' r='21' fill='#fff'/>
<circle cx='143' cy='64.7' r='14.5' fill='#fff'/>
<rect x='66' y='60' width='77' height='19.2' fill='#fff'/>
<path d='M-60 186 C-20 186 20 189 50 194 C70 197 80 200 95 201.5 C115 203 135 202 150 206 C170 211 185 219 208 224 C225 228 240 230 280 232 L280 300 L-60 300 Z' fill='#c3de82'/>
<path d='M-60 244 C-30 243 -10 241 10 236 C35 231 55 218 80 214 C95 212 105 212.5 115 213 C150 214 175 220 208 226 C230 230 250 232 280 234 L280 300 L-60 300 Z' fill='#8ba709'/>
</g></svg><circle cx='1592.6' cy='972.8' r='47.6' fill='none' stroke='#d5d5d5' stroke-width='5.8'/><svg x='1551.8' y='932' width='81.6' height='81.6' viewBox='-32 1.4 277.5 277.5'><defs><clipPath id='hc1592'><circle cx='106.75' cy='140.15' r='138.75'/></clipPath></defs><g clip-path='url(#hc1592)'>
<rect x='-60' y='-20' width='340' height='320' fill='url(#sky)'/>
<circle cx='105' cy='48.5' r='29' fill='#fff'/>
<circle cx='66' cy='58.7' r='21' fill='#fff'/>
<circle cx='143' cy='64.7' r='14.5' fill='#fff'/>
<rect x='66' y='60' width='77' height='19.2' fill='#fff'/>
<path d='M-60 186 C-20 186 20 189 50 194 C70 197 80 200 95 201.5 C115 203 135 202 150 206 C170 211 185 219 208 224 C225 228 240 230 280 232 L280 300 L-60 300 Z' fill='#c3de82'/>
<path d='M-60 244 C-30 243 -10 241 10 236 C35 231 55 218 80 214 C95 212 105 212.5 115 213 C150 214 175 220 208 226 C230 230 250 232 280 234 L280 300 L-60 300 Z' fill='#8ba709'/>
</g></svg><circle cx='1728.3' cy='972.8' r='47.6' fill='none' stroke='#d5d5d5' stroke-width='5.8'/><svg x='1687.5' y='932' width='81.6' height='81.6' viewBox='-32 1.4 277.5 277.5'><defs><clipPath id='hc1728'><circle cx='106.75' cy='140.15' r='138.75'/></clipPath></defs><g clip-path='url(#hc1728)'>
<rect x='-60' y='-20' width='340' height='320' fill='url(#sky)'/>
<circle cx='105' cy='48.5' r='29' fill='#fff'/>
<circle cx='66' cy='58.7' r='21' fill='#fff'/>
<circle cx='143' cy='64.7' r='14.5' fill='#fff'/>
<rect x='66' y='60' width='77' height='19.2' fill='#fff'/>
<path d='M-60 186 C-20 186 20 189 50 194 C70 197 80 200 95 201.5 C115 203 135 202 150 206 C170 211 185 219 208 224 C225 228 240 230 280 232 L280 300 L-60 300 Z' fill='#c3de82'/>
<path d='M-60 244 C-30 243 -10 241 10 236 C35 231 55 218 80 214 C95 212 105 212.5 115 213 C150 214 175 220 208 226 C230 230 250 232 280 234 L280 300 L-60 300 Z' fill='#8ba709'/>
</g></svg><rect x='1337.0' y='1088.5' width='8.3' height='10.4' rx='1.6' fill='#111'/><rect x='1337.0' y='1101.5' width='8.3' height='10.4' rx='1.6' fill='#111'/><rect x='1337.0' y='1114.5' width='8.3' height='10.4' rx='1.6' fill='#111'/><rect x='1348.0' y='1088.5' width='8.3' height='10.4' rx='1.6' fill='#111'/><rect x='1348.0' y='1101.5' width='8.3' height='10.4' rx='1.6' fill='#111'/><rect x='1348.0' y='1114.5' width='8.3' height='10.4' rx='1.6' fill='#111'/><rect x='1359.1' y='1088.5' width='8.3' height='10.4' rx='1.6' fill='#111'/><rect x='1359.1' y='1101.5' width='8.3' height='10.4' rx='1.6' fill='#111'/><rect x='1359.1' y='1114.5' width='8.3' height='10.4' rx='1.6' fill='#111'/><rect x='1299' y='1138.5' width='105.5' height='3.5' fill='#111'/><rect x='1550.2' y='1090.8' width='33' height='32' rx='8' fill='none' stroke='#6d7075' stroke-width='3'/><path d='M1551 1100.5 H1582.5 M1558 1091.5 L1562.5 1100 M1566.5 1091.5 L1571 1100' stroke='#6d7075' stroke-width='2.6'/><path d='M1562 1105.5 L1572.5 1111.5 L1562 1117.5 Z' fill='#6d7075'/><path d='M1764.2 1094 H1775.5 L1781 1089.8 L1786.5 1094 H1797.6 V1122.9 H1764.2 Z' fill='none' stroke='#6d7075' stroke-width='3' stroke-linejoin='round'/><circle cx='1781' cy='1104' r='4.8' fill='none' stroke='#6d7075' stroke-width='2.8'/><path d='M1770.5 1121 C1771 1114.5 1775 1112.5 1781 1112.5 C1787 1112.5 1791 1114.5 1791.5 1121' fill='none' stroke='#6d7075' stroke-width='2.8'/><svg x='1248.6' y='1142' width='208.3' height='278' viewBox='0 0 208 278' preserveAspectRatio='none'>
<rect x='-60' y='-20' width='340' height='320' fill='url(#sky)'/>
<circle cx='105' cy='48.5' r='29' fill='#fff'/>
<circle cx='66' cy='58.7' r='21' fill='#fff'/>
<circle cx='143' cy='64.7' r='14.5' fill='#fff'/>
<rect x='66' y='60' width='77' height='19.2' fill='#fff'/>
<path d='M-60 186 C-20 186 20 189 50 194 C70 197 80 200 95 201.5 C115 203 135 202 150 206 C170 211 185 219 208 224 C225 228 240 230 280 232 L280 300 L-60 300 Z' fill='#c3de82'/>
<path d='M-60 244 C-30 243 -10 241 10 236 C35 231 55 218 80 214 C95 212 105 212.5 115 213 C150 214 175 220 208 226 C230 230 250 232 280 234 L280 300 L-60 300 Z' fill='#8ba709'/>
</svg><svg x='1248.6' y='1424.8' width='208.3' height='86.5' viewBox='0 0 208 86.5' preserveAspectRatio='none'>
<rect x='-60' y='-20' width='340' height='320' fill='url(#sky)'/>
<circle cx='105' cy='48.5' r='29' fill='#fff'/>
<circle cx='66' cy='58.7' r='21' fill='#fff'/>
<circle cx='143' cy='64.7' r='14.5' fill='#fff'/>
<rect x='66' y='60' width='77' height='19.2' fill='#fff'/>
<path d='M-60 186 C-20 186 20 189 50 194 C70 197 80 200 95 201.5 C115 203 135 202 150 206 C170 211 185 219 208 224 C225 228 240 230 280 232 L280 300 L-60 300 Z' fill='#c3de82'/>
<path d='M-60 244 C-30 243 -10 241 10 236 C35 231 55 218 80 214 C95 212 105 212.5 115 213 C150 214 175 220 208 226 C230 230 250 232 280 234 L280 300 L-60 300 Z' fill='#8ba709'/>
</svg><svg x='1462.0' y='1142' width='208.3' height='278' viewBox='0 0 208 278' preserveAspectRatio='none'>
<rect x='-60' y='-20' width='340' height='320' fill='url(#sky)'/>
<circle cx='105' cy='48.5' r='29' fill='#fff'/>
<circle cx='66' cy='58.7' r='21' fill='#fff'/>
<circle cx='143' cy='64.7' r='14.5' fill='#fff'/>
<rect x='66' y='60' width='77' height='19.2' fill='#fff'/>
<path d='M-60 186 C-20 186 20 189 50 194 C70 197 80 200 95 201.5 C115 203 135 202 150 206 C170 211 185 219 208 224 C225 228 240 230 280 232 L280 300 L-60 300 Z' fill='#c3de82'/>
<path d='M-60 244 C-30 243 -10 241 10 236 C35 231 55 218 80 214 C95 212 105 212.5 115 213 C150 214 175 220 208 226 C230 230 250 232 280 234 L280 300 L-60 300 Z' fill='#8ba709'/>
</svg><svg x='1462.0' y='1424.8' width='208.3' height='86.5' viewBox='0 0 208 86.5' preserveAspectRatio='none'>
<rect x='-60' y='-20' width='340' height='320' fill='url(#sky)'/>
<circle cx='105' cy='48.5' r='29' fill='#fff'/>
<circle cx='66' cy='58.7' r='21' fill='#fff'/>
<circle cx='143' cy='64.7' r='14.5' fill='#fff'/>
<rect x='66' y='60' width='77' height='19.2' fill='#fff'/>
<path d='M-60 186 C-20 186 20 189 50 194 C70 197 80 200 95 201.5 C115 203 135 202 150 206 C170 211 185 219 208 224 C225 228 240 230 280 232 L280 300 L-60 300 Z' fill='#c3de82'/>
<path d='M-60 244 C-30 243 -10 241 10 236 C35 231 55 218 80 214 C95 212 105 212.5 115 213 C150 214 175 220 208 226 C230 230 250 232 280 234 L280 300 L-60 300 Z' fill='#8ba709'/>
</svg><svg x='1675.0' y='1142' width='208.3' height='278' viewBox='0 0 208 278' preserveAspectRatio='none'>
<rect x='-60' y='-20' width='340' height='320' fill='url(#sky)'/>
<circle cx='105' cy='48.5' r='29' fill='#fff'/>
<circle cx='66' cy='58.7' r='21' fill='#fff'/>
<circle cx='143' cy='64.7' r='14.5' fill='#fff'/>
<rect x='66' y='60' width='77' height='19.2' fill='#fff'/>
<path d='M-60 186 C-20 186 20 189 50 194 C70 197 80 200 95 201.5 C115 203 135 202 150 206 C170 211 185 219 208 224 C225 228 240 230 280 232 L280 300 L-60 300 Z' fill='#c3de82'/>
<path d='M-60 244 C-30 243 -10 241 10 236 C35 231 55 218 80 214 C95 212 105 212.5 115 213 C150 214 175 220 208 226 C230 230 250 232 280 234 L280 300 L-60 300 Z' fill='#8ba709'/>
</svg><svg x='1675.0' y='1424.8' width='208.3' height='86.5' viewBox='0 0 208 86.5' preserveAspectRatio='none'>
<rect x='-60' y='-20' width='340' height='320' fill='url(#sky)'/>
<circle cx='105' cy='48.5' r='29' fill='#fff'/>
<circle cx='66' cy='58.7' r='21' fill='#fff'/>
<circle cx='143' cy='64.7' r='14.5' fill='#fff'/>
<rect x='66' y='60' width='77' height='19.2' fill='#fff'/>
<path d='M-60 186 C-20 186 20 189 50 194 C70 197 80 200 95 201.5 C115 203 135 202 150 206 C170 211 185 219 208 224 C225 228 240 230 280 232 L280 300 L-60 300 Z' fill='#c3de82'/>
<path d='M-60 244 C-30 243 -10 241 10 236 C35 231 55 218 80 214 C95 212 105 212.5 115 213 C150 214 175 220 208 226 C230 230 250 232 280 234 L280 300 L-60 300 Z' fill='#8ba709'/>
</svg><path d='M1293 1567 V1549 L1309.8 1534.5 L1326.5 1549 V1567 H1316.5 V1557.5 A6.7 6.7 0 0 0 1303 1557.5 V1567 Z' fill='none' stroke='#111' stroke-width='3.2' stroke-linejoin='round'/><circle cx='1435' cy='1547.8' r='13.3' fill='none' stroke='#111' stroke-width='3.2'/><line x1='1444.8' y1='1557.6' x2='1454.5' y2='1567.3' stroke='#111' stroke-width='3.4' stroke-linecap='round'/><rect x='1549.8' y='1534.5' width='33.2' height='32.5' rx='8' fill='none' stroke='#111' stroke-width='3.2'/><path d='M1566.4 1541.5 V1560 M1557 1550.7 H1575.8' stroke='#111' stroke-width='3.2'/><rect x='1678.8' y='1534.5' width='33' height='32.5' rx='8' fill='none' stroke='#111' stroke-width='3.2'/><path d='M1679.5 1543.5 H1711 M1686.5 1535 L1691 1543 M1695 1535 L1699.5 1543' stroke='#111' stroke-width='2.8'/><path d='M1690.5 1548 L1701.5 1554.5 L1690.5 1561 Z' fill='#111'/><svg x='1803.5' y='1530' width='41.5' height='41.5' viewBox='-34 2 276 276'><defs><clipPath id='cc2'><circle cx='104' cy='140' r='138'/></clipPath></defs><g clip-path='url(#cc2)'>
<rect x='-60' y='-20' width='340' height='320' fill='url(#sky)'/>
<circle cx='105' cy='48.5' r='29' fill='#fff'/>
<circle cx='66' cy='58.7' r='21' fill='#fff'/>
<circle cx='143' cy='64.7' r='14.5' fill='#fff'/>
<rect x='66' y='60' width='77' height='19.2' fill='#fff'/>
<path d='M-60 186 C-20 186 20 189 50 194 C70 197 80 200 95 201.5 C115 203 135 202 150 206 C170 211 185 219 208 224 C225 228 240 230 280 232 L280 300 L-60 300 Z' fill='#c3de82'/>
<path d='M-60 244 C-30 243 -10 241 10 236 C35 231 55 218 80 214 C95 212 105 212.5 115 213 C150 214 175 220 208 226 C230 230 250 232 280 234 L280 300 L-60 300 Z' fill='#8ba709'/>
</g></svg><circle cx='1824.2' cy='1550.7' r='20.2' fill='none' stroke='#9aa1a6' stroke-width='1.6'/></svg>
<div class='t' style='left:63.0px;top:35.0px;transform-origin:0 50%;transform:scaleX(1.122);font-size:27px;font-weight:bold;color:#111;line-height:32px;letter-spacing:.2px'>Gebruikersnaam</div>
<div class='t' style='left:201.5px;top:122.0px;transform-origin:0 50%;transform:scaleX(1.240);font-size:17.5px;font-weight:bold;color:#111;line-height:22px;letter-spacing:.3px'>Naam</div>
<div class='t' style='left:202.0px;top:165.6px;transform-origin:0 50%;transform:scaleX(1.070);font-size:24px;font-weight:bold;color:#111;line-height:26px'>10</div>
<div class='t' style='left:202.0px;top:194.1px;transform-origin:0 50%;transform:scaleX(1.153);font-size:18.5px;color:#222;line-height:22px;-webkit-text-stroke:.2px #222'>Berichten</div>
<div class='t' style='left:359.8px;top:165.6px;transform-origin:0 50%;transform:scaleX(1.070);font-size:24px;font-weight:bold;color:#111;line-height:26px'>250</div>
<div class='t' style='left:359.8px;top:194.1px;transform-origin:0 50%;transform:scaleX(1.130);font-size:18.5px;color:#222;line-height:22px;-webkit-text-stroke:.2px #222'>Volgers</div>
<div class='t' style='left:494.0px;top:165.6px;transform-origin:0 50%;transform:scaleX(1.070);font-size:24px;font-weight:bold;color:#111;line-height:26px'>50</div>
<div class='t' style='left:494.0px;top:194.1px;transform-origin:0 50%;transform:scaleX(1.130);font-size:18.5px;color:#222;line-height:22px;-webkit-text-stroke:.2px #222'>Volgend</div>
<div class='t' style='left:25.5px;top:266.0px;transform-origin:0 50%;transform:scaleX(1.118);font-size:19px;color:#222;line-height:24px;-webkit-text-stroke:.2px #222'>Plaats jouw Instagram bio hier.</div>
<div class='t' style='left:63.5px;top:357.0px;transform-origin:0 50%;transform:scaleX(1.113);font-size:17px;color:#4a86c2;line-height:22px;-webkit-text-stroke:.15px #4a86c2'>www.website.nl</div>
<div class='t' style='left:109.5px;top:414.0px;transform-origin:0 50%;transform:scaleX(1.000);font-size:20px;font-weight:bold;color:#111;line-height:24px'>Follow</div>
<div class='t' style='left:386.0px;top:413.0px;transform-origin:0 50%;transform:scaleX(1.000);font-size:20px;font-weight:bold;color:#111;line-height:24px'>Message</div>
<div class='t' style='left:35.5px;top:586.0px;transform-origin:0 50%;transform:scaleX(1.120);font-size:19px;color:#222;line-height:24px;-webkit-text-stroke:.2px #222'>Highlight</div>
<div class='t' style='left:169.0px;top:586.0px;transform-origin:0 50%;transform:scaleX(1.120);font-size:19px;color:#222;line-height:24px;-webkit-text-stroke:.2px #222'>Highlight</div>
<div class='t' style='left:306.0px;top:586.0px;transform-origin:0 50%;transform:scaleX(1.120);font-size:19px;color:#222;line-height:24px;-webkit-text-stroke:.2px #222'>Highlight</div>
<div class='t' style='left:442.0px;top:586.0px;transform-origin:0 50%;transform:scaleX(1.120);font-size:19px;color:#222;line-height:24px;-webkit-text-stroke:.2px #222'>Highlight</div>
</div>
</body></html>
